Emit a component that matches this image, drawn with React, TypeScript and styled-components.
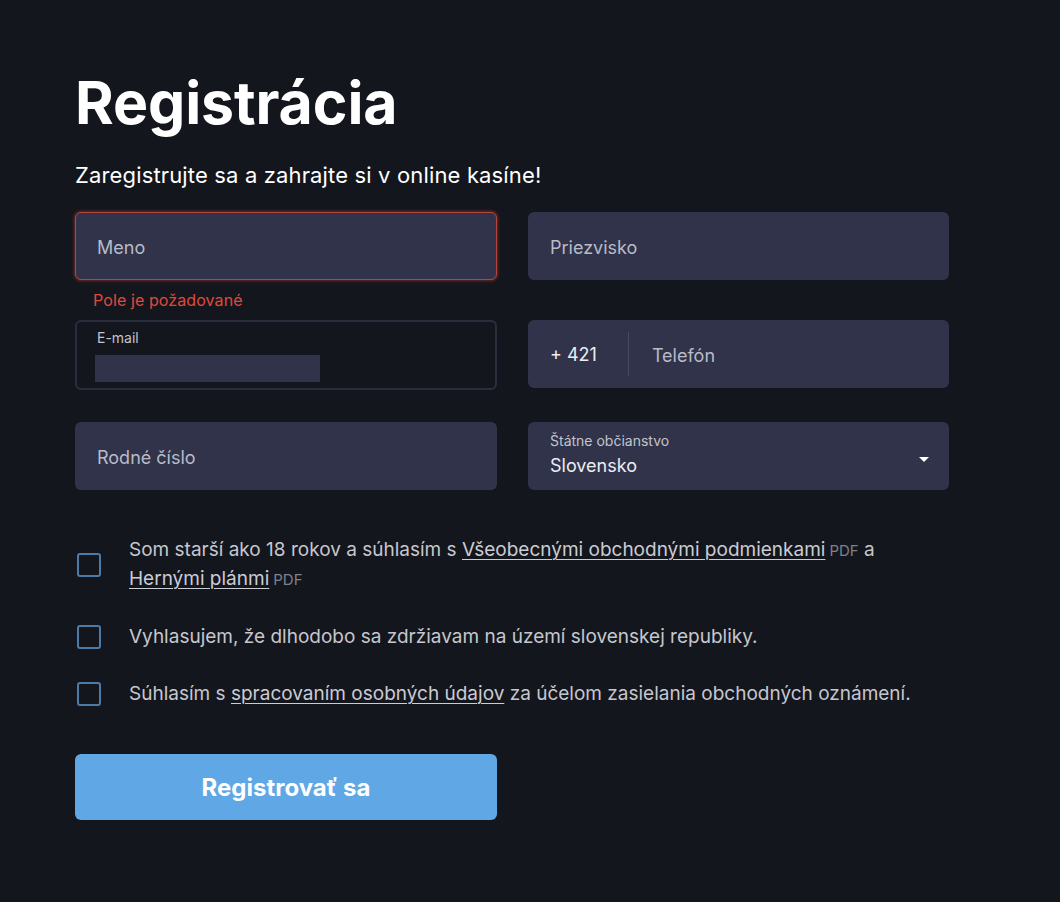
import React from 'react';
import styled, { createGlobalStyle, css } from 'styled-components';

const GlobalStyle = createGlobalStyle`
  html, body {
    margin: 0;
    padding: 0;
    background: #14161d;
  }
  body {
    font-family: Inter, 'Noto Sans', 'Liberation Sans', sans-serif;
    color: #ffffff;
  }
  * {
    box-sizing: border-box;
  }
`;

const Page = styled.main`
  min-height: 902px;
  padding: 68px 0 0 75px;
`;

const Form = styled.form`
  width: 874px;
`;

const Title = styled.h1`
  margin: 0;
  font-size: 59px;
  line-height: 70px;
  font-weight: 700;
  letter-spacing: -0.1px;
  color: #ffffff;
`;

const Subtitle = styled.p`
  margin: 23px 0 23px;
  font-size: 22px;
  line-height: 28px;
  font-weight: 400;
  letter-spacing: 0.15px;
  color: #ffffff;
`;

const Grid = styled.div`
  display: grid;
  grid-template-columns: 422px 421px;
  column-gap: 31px;
  row-gap: 34px;
  align-items: start;
`;

const Field = styled.div`
  display: flex;
  flex-direction: column;
`;

const Box = styled.div<{ $error?: boolean; $outlined?: boolean }>`
  position: relative;
  height: 68px;
  border-radius: 6px;
  background: #30334a;
  display: flex;
  align-items: center;
  padding: 3px 22px 0;
  ${(p) =>
    p.$error &&
    css`
      border: 1px solid #b2453d;
      box-shadow: 0 0 3px 1px rgba(214, 72, 60, 0.45);
      padding: 3px 21px 0;
    `}
  ${(p) =>
    p.$outlined &&
    css`
      height: 70px;
      margin-bottom: -2px;
      background: #14161d;
      border: 2px solid #2a2d3c;
      padding: 0 20px;
    `}
`;

const Placeholder = styled.span`
  font-size: 18px;
  color: #b9bbc8;
`;

const ErrorText = styled.span`
  margin: 10px 0 -24px 18px;
  font-size: 16px;
  line-height: 20px;
  color: #e1483d;
  letter-spacing: 0.1px;
`;

const Stack = styled.div`
  display: flex;
  flex-direction: column;
  flex: 1;
`;

const SmallLabel = styled.span`
  font-size: 14px;
  line-height: 18px;
  color: #c2c4cd;
`;

const Redacted = styled.span`
  display: block;
  width: 225px;
  height: 27px;
  background: #30334a;
  margin: 8px 0 0 -2px;
`;

const Value = styled.span`
  margin-top: 5px;
  font-size: 18px;
  line-height: 22px;
  color: #eceef4;
`;

const SelectStack = styled(Stack)`
  margin-top: -7px;
`;

const Prefix = styled.span`
  font-size: 18px;
  color: #eceef4;
  padding-right: 31px;
  margin-right: 23px;
  align-self: stretch;
  display: flex;
  align-items: center;
  border-right: 1px solid #474a62;
  margin-top: 9px;
  margin-bottom: 12px;
`;

const Caret = styled.span`
  width: 0;
  height: 0;
  border-left: 5px solid transparent;
  border-right: 5px solid transparent;
  border-top: 5px solid #ffffff;
  margin-top: 3px;
  margin-right: -2px;
`;

const Consents = styled.div`
  margin-top: 46px;
  display: flex;
  flex-direction: column;
  gap: 29px;
`;

const Consent = styled.label`
  display: flex;
  align-items: flex-start;
  gap: 28px;
  font-size: 19px;
  line-height: 28px;
  color: #c6c7ce;
  padding-left: 2px;
`;

const ConsentText = styled.span<{ $narrow?: boolean }>`
  max-width: ${(p) => (p.$narrow ? '780px' : 'none')};
`;

const Check = styled.span<{ $top?: number }>`
  flex: none;
  width: 24px;
  height: 24px;
  border: 2px solid #4d7ba8;
  border-radius: 3px;
  margin-top: ${(p) => p.$top ?? 2}px;
`;

const Link = styled.a`
  color: #cbccd4;
  text-decoration: underline;
  text-underline-offset: 3px;
  text-decoration-thickness: 1px;
`;

const Pdf = styled.span`
  font-size: 15px;
  color: #7f818c;
  margin-left: 4px;
`;

const Submit = styled.button`
  margin-top: 46px;
  width: 422px;
  height: 66px;
  border: none;
  border-radius: 6px;
  background: #5fa7e5;
  color: #ffffff;
  font-family: inherit;
  font-size: 24px;
  font-weight: 700;
  cursor: pointer;
`;

export default function App() {
  return (
    <>
      <GlobalStyle />
      <Page>
        <Form onSubmit={(e) => e.preventDefault()}>
          <Title>Registrácia</Title>
          <Subtitle>Zaregistrujte sa a zahrajte si v online kasíne!</Subtitle>

          <Grid>
            <Field>
              <Box $error>
                <Placeholder>Meno</Placeholder>
              </Box>
              <ErrorText>Pole je požadované</ErrorText>
            </Field>
            <Field>
              <Box>
                <Placeholder>Priezvisko</Placeholder>
              </Box>
            </Field>

            <Field>
              <Box $outlined>
                <Stack>
                  <SmallLabel>E-mail</SmallLabel>
                  <Redacted />
                </Stack>
              </Box>
            </Field>
            <Field>
              <Box>
                <Prefix>+ 421</Prefix>
                <Placeholder>Telefón</Placeholder>
              </Box>
            </Field>

            <Field>
              <Box>
                <Placeholder>Rodné číslo</Placeholder>
              </Box>
            </Field>
            <Field>
              <Box>
                <SelectStack>
                  <SmallLabel>Štátne občianstvo</SmallLabel>
                  <Value>Slovensko</Value>
                </SelectStack>
                <Caret />
              </Box>
            </Field>
          </Grid>

          <Consents>
            <Consent>
              <Check $top={17} />
              <ConsentText $narrow>
                Som starší ako 18 rokov a súhlasím s{' '}
                <Link href="#">Všeobecnými obchodnými podmienkami</Link>
                <Pdf>PDF</Pdf> a <Link href="#">Hernými plánmi</Link>
                <Pdf>PDF</Pdf>
              </ConsentText>
            </Consent>
            <Consent>
              <Check />
              <ConsentText>
                Vyhlasujem, že dlhodobo sa zdržiavam na území slovenskej republiky.
              </ConsentText>
            </Consent>
            <Consent>
              <Check />
              <ConsentText>
                Súhlasím s <Link href="#">spracovaním osobných údajov</Link> za účelom zasielania
                obchodných oznámení.
              </ConsentText>
            </Consent>
          </Consents>

          <Submit type="submit">Registrovať sa</Submit>
        </Form>
      </Page>
    </>
  );
}
